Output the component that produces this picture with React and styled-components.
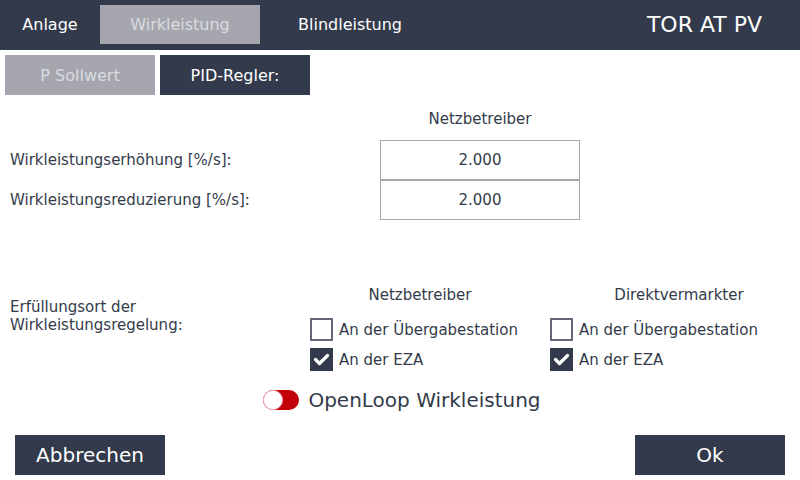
import styled, { createGlobalStyle } from "styled-components";

const dark = "#323a4b";
const grey = "#a6a7ae";
const text = "#333b4a";

const GlobalStyle = createGlobalStyle`
  html, body {
    margin: 0;
    padding: 0;
    background: #ffffff;
  }
  body {
    font-family: "DejaVu Sans", "Noto Sans", sans-serif;
    color: ${text};
  }
`;

const Page = styled.div`
  width: 800px;
  height: 480px;
  display: flex;
  flex-direction: column;
  overflow: hidden;
`;

const Header = styled.div`
  height: 50px;
  background: ${dark};
  display: flex;
  align-items: stretch;
`;

const Tab = styled.div`
  width: ${({ $w }) => $w}px;
  margin: 5px 0 6px;
  display: flex;
  align-items: center;
  justify-content: center;
  font-size: 16px;
  color: ${({ $active }) => ($active ? "#d9dbe0" : "#ffffff")};
  background: ${({ $active }) => ($active ? grey : "transparent")};
`;

const Title = styled.div`
  margin-left: auto;
  margin-right: 38px;
  display: flex;
  align-items: center;
  font-size: 22px;
  color: #ffffff;
  padding-bottom: 1px;
`;

const SubTabs = styled.div`
  display: flex;
  gap: 5px;
  padding: 5px 0 0 5px;
`;

const SubTab = styled.div`
  width: 150px;
  height: 40px;
  display: flex;
  align-items: center;
  justify-content: center;
  font-size: 16px;
  background: ${({ $active }) => ($active ? dark : grey)};
  color: ${({ $active }) => ($active ? "#ffffff" : "#d9dbe0")};
`;

const RateGrid = styled.div`
  display: grid;
  grid-template-columns: 370px 200px;
  padding-left: 10px;
  margin-top: 14px;
`;

const ColHead = styled.div`
  font-size: 15px;
  line-height: 20px;
  text-align: center;
  grid-column: 2;
  margin-bottom: 11px;
`;

const FieldLabel = styled.div`
  grid-column: 1;
  font-size: 15px;
  display: flex;
  align-items: center;
  height: 40px;
`;

const ValueBox = styled.div`
  grid-column: 2;
  height: 38px;
  border: 1px solid ${grey};
  display: flex;
  align-items: center;
  justify-content: center;
  font-size: 15px;
`;

const PlaceGrid = styled.div`
  display: grid;
  grid-template-columns: 300px 240px 250px;
  grid-template-rows: 26px 23px 23px;
  row-gap: 7px;
  padding-left: 10px;
  margin-top: 65px;
`;

const PlaceLabel = styled.div`
  grid-column: 1;
  grid-row: 1 / span 3;
  padding-top: 13px;
  font-size: 15px;
  line-height: 18px;
`;

const PlaceHead = styled.div`
  grid-row: 1;
  align-self: start;
  font-size: 15px;
  line-height: 20px;
  text-align: center;
  padding-right: ${({ $pr }) => $pr}px;
  padding-left: ${({ $pl }) => $pl}px;
`;

const CheckRow = styled.label`
  display: flex;
  align-items: center;
  gap: 6px;
  font-size: 15px;
`;

const Box = styled.span`
  width: 23px;
  height: 23px;
  flex: none;
  box-sizing: border-box;
  display: flex;
  align-items: center;
  justify-content: center;
  border: 2px solid ${({ $on }) => ($on ? dark : "#626776")};
  background: ${({ $on }) => ($on ? dark : "#ffffff")};
`;

const ToggleRow = styled.div`
  display: flex;
  justify-content: center;
  align-items: center;
  gap: 9px;
  margin-top: 19px;
  padding-left: 4px;
  height: 20px;
  font-size: 20px;
`;

const Track = styled.span`
  width: 36px;
  height: 20px;
  border-radius: 10px;
  background: #c40008;
  position: relative;
`;

const Knob = styled.span`
  position: absolute;
  left: 0;
  top: 0;
  width: 20px;
  height: 20px;
  box-sizing: border-box;
  border-radius: 50%;
  background: #ffffff;
  border: 1px solid #eab7b9;
`;

const Footer = styled.div`
  display: flex;
  justify-content: space-between;
  padding: 0 15px;
  margin-top: 25px;
`;

const Button = styled.div`
  width: 150px;
  height: 40px;
  background: ${dark};
  color: #ffffff;
  display: flex;
  align-items: center;
  justify-content: center;
  font-size: 20px;
`;

function Check({ on, children }) {
  return (
    <CheckRow>
      <Box $on={on}>
        {on && (
          <svg width="17" height="17" viewBox="0 0 17 17">
            <polyline
              points="2.5,8.5 6.5,12.5 14.5,4.5"
              fill="none"
              stroke="#ffffff"
              strokeWidth="3.2"
              strokeLinecap="round"
              strokeLinejoin="round"
            />
          </svg>
        )}
      </Box>
      {children}
    </CheckRow>
  );
}

export default function App() {
  return (
    <>
      <GlobalStyle />
      <Page>
        <Header>
          <Tab $w={100}>Anlage</Tab>
          <Tab $w={160} $active>
            Wirkleistung
          </Tab>
          <Tab $w={180}>Blindleistung</Tab>
          <Title>TOR AT PV</Title>
        </Header>

        <SubTabs>
          <SubTab>P Sollwert</SubTab>
          <SubTab $active>PID-Regler:</SubTab>
        </SubTabs>

        <RateGrid>
          <ColHead>Netzbetreiber</ColHead>
          <FieldLabel>Wirkleistungserhöhung [%/s]:</FieldLabel>
          <ValueBox>2.000</ValueBox>
          <FieldLabel>Wirkleistungsreduzierung [%/s]:</FieldLabel>
          <ValueBox>2.000</ValueBox>
        </RateGrid>

        <PlaceGrid>
          <PlaceLabel>
            Erfüllungsort der
            <br />
            Wirkleistungsregelung:
          </PlaceLabel>
          <PlaceHead $pr={20} $pl={0}>
            Netzbetreiber
          </PlaceHead>
          <PlaceHead $pr={0} $pl={8}>
            Direktvermarkter
          </PlaceHead>
          <Check>An der Übergabestation</Check>
          <Check>An der Übergabestation</Check>
          <Check on>An der EZA</Check>
          <Check on>An der EZA</Check>
        </PlaceGrid>

        <ToggleRow>
          <Track>
            <Knob />
          </Track>
          OpenLoop Wirkleistung
        </ToggleRow>

        <Footer>
          <Button>Abbrechen</Button>
          <Button>Ok</Button>
        </Footer>
      </Page>
    </>
  );
}
